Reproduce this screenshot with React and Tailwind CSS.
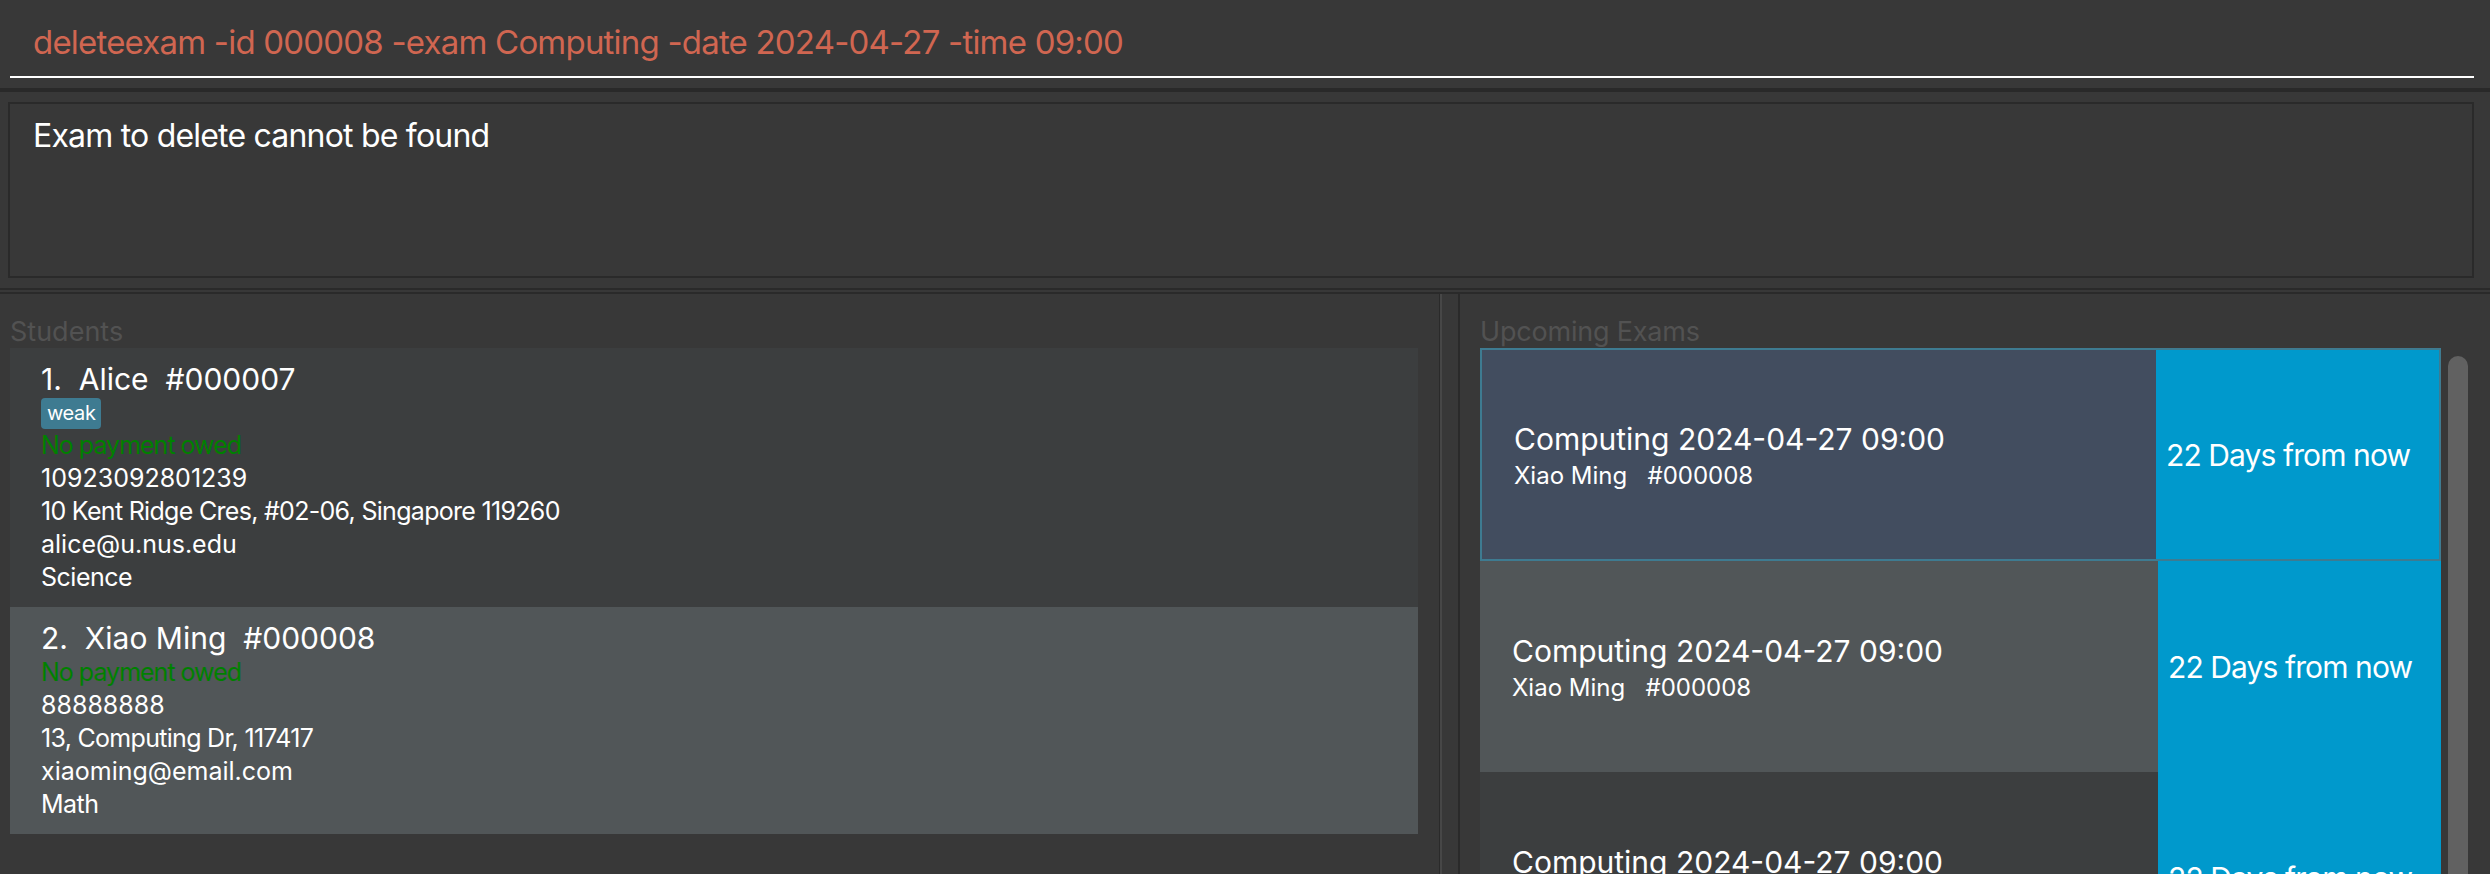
import React from 'react';

const students = [
  {
    index: 1,
    name: 'Alice',
    id: '000007',
    tags: ['weak'],
    phone: '10923092801239',
    address: '10 Kent Ridge Cres, #02-06, Singapore 119260',
    email: 'alice@u.nus.edu',
    subject: 'Science',
    bg: 'bg-[#3c3e3f]',
  },
  {
    index: 2,
    name: 'Xiao Ming',
    id: '000008',
    tags: [],
    phone: '88888888',
    address: '13, Computing Dr, 117417',
    email: 'xiaoming@email.com',
    subject: 'Math',
    bg: 'bg-[#515658]',
  },
];

function StudentCard({ student }) {
  return (
    <div className={`${student.bg} pl-[31px] pt-[13px] pb-[13px] text-white`}>
      <div className="text-[30px] leading-[36px] whitespace-pre">
        {student.index}.  {student.name}  #{student.id}
      </div>
      {student.tags.length > 0 && (
        <div className="flex gap-2 h-[32px] pt-[1px]">
          {student.tags.map((t) => (
            <span key={t} className="bg-[#3e7b91] rounded-[4px] px-[6px] h-[31px] text-[20px] leading-[31px] tracking-[-0.4px]">
              {t}
            </span>
          ))}
        </div>
      )}
      <div className="text-[25px] leading-[33px] tracking-[-0.5px]">
        <div className="text-[#008000] tracking-[-1px]">No payment owed</div>
        <div className="tracking-[0px]">{student.phone}</div>
        <div className="tracking-[-0.7px]">{student.address}</div>
        <div className="tracking-[0px]">{student.email}</div>
        <div>{student.subject}</div>
      </div>
    </div>
  );
}

function ExamCard({ selected, bg, height }) {
  return (
    <div className={`flex ${height} ${selected ? 'border-2 border-[#3e7b91]' : ''}`}>
      <div className={`flex-1 ${bg} flex flex-col justify-center pl-[32px] text-white`}>
        <div className="text-[30px] leading-[41px]">Computing 2024-04-27 09:00</div>
        <div className="text-[24px] leading-[31px] whitespace-pre">Xiao Ming   #000008</div>
      </div>
      <div className="w-[283px] bg-[#0099cc] flex items-center pl-[10px] text-[30px] leading-[36px] tracking-[-0.9px] text-white">
        22 Days from now
      </div>
    </div>
  );
}

export default function App() {
  return (
    <div className="w-[2490px] h-[874px] overflow-hidden bg-[#383838] font-['Inter','Noto_Sans',sans-serif] flex flex-col">
      {/* Command box */}
      <div className="h-[88px] pl-[10px] pr-[16px]">
        <div className="h-[78px] border-b-2 border-white pl-[23px] pt-[22px]">
          <div className="text-[33px] leading-[40px] tracking-[-0.8px] text-[#d06651]">
            deleteexam -id 000008 -exam Computing -date 2024-04-27 -time 09:00
          </div>
        </div>
      </div>
      <div className="h-[4px] bg-[#292929]" />

      {/* Result display */}
      <div className="h-[196px] pt-[10px] pl-[8px] pr-[16px]">
        <div className="h-[176px] border-2 border-[#2a2a2a] pl-[23px] pt-[13px]">
          <div className="text-[32px] leading-[38px] tracking-[-0.8px] text-white">Exam to delete cannot be found</div>
        </div>
      </div>
      <div className="h-[2px] bg-[#2a2a2a]" />
      <div className="h-[2px]" />
      <div className="h-[2px] bg-[#2a2a2a]" />

      {/* Lists */}
      <div className="flex flex-1 min-h-0">
        <div className="w-[1439px] pt-[22px] pl-[10px]">
          <div className="text-[27px] leading-[32px] text-[#525252]">Students</div>
          <div className="w-[1408px]">
            {students.map((s) => (
              <StudentCard key={s.id} student={s} />
            ))}
          </div>
        </div>
        <div className="w-[1px] bg-[#2a2a2a]" />
        <div className="w-[2px] bg-[#474747]" />
        <div className="w-[16px]" />
        <div className="flex-1 border-l-2 border-[#2a2a2a] pt-[22px] pl-[20px]">
          <div className="text-[27px] leading-[32px] tracking-[-0.2px] text-[#525252]">Upcoming Exams</div>
          <div className="flex gap-[7px]">
            <div className="w-[961px] flex flex-col">
              <ExamCard selected bg="bg-[#424d5f]" height="h-[213px]" />
              <ExamCard bg="bg-[#515658]" height="h-[211px]" />
              <ExamCard bg="bg-[#3c3e3f]" height="h-[211px]" />
            </div>
            <div className="w-[20px] h-[600px] mt-[8px] rounded-full bg-[#616161]" />
          </div>
        </div>
      </div>
    </div>
  );
}
